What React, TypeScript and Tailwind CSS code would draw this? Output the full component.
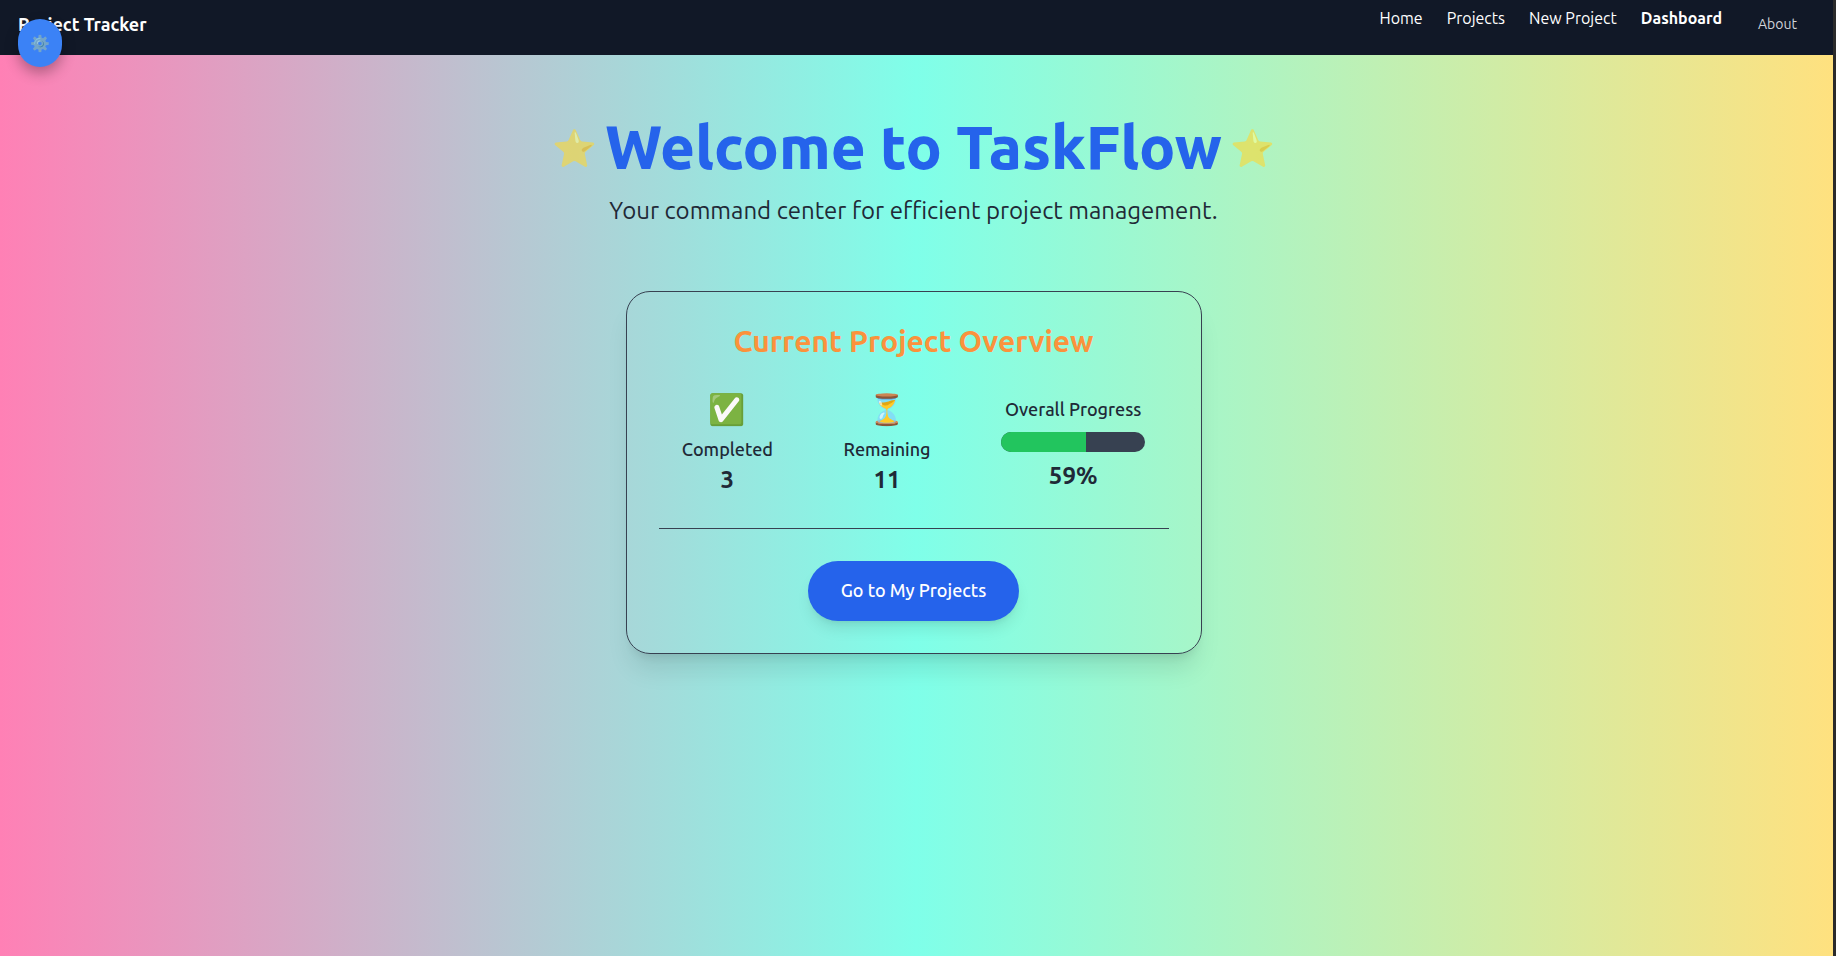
const Star = () => (
  <span className="pt-px text-4xl font-normal opacity-60" aria-hidden="true">
    ⭐
  </span>
);

const links = [
  { label: "Home", weight: "font-normal" },
  { label: "Projects", weight: "font-normal" },
  { label: "New Project", weight: "font-normal" },
  { label: "Dashboard", weight: "font-semibold" },
];

const stats = [
  { label: "Completed", value: 3, icon: "✅" },
  { label: "Remaining", value: 11, icon: "⏳" },
];

const progress = 59;

export default function App() {
  return (
    <div className="flex min-h-screen flex-col border-r-3 border-[#2b2b2b] bg-linear-to-r/srgb from-[#ff80b5] via-[#7fffe9] to-[#ffe17f] font-['Ubuntu','Noto_Sans','Noto_Color_Emoji',sans-serif] text-[#1f2937]">
      <header className="flex h-[55px] items-start justify-between bg-[#111827] pr-9 pl-[18px] text-white">
        <p className="pt-[10px] text-lg leading-7 font-semibold">Project Tracker</p>
        <nav className="flex gap-6 pt-[6px] text-base leading-6">
          {links.map((link) => (
            <a key={link.label} href="#" className={link.weight}>
              {link.label}
            </a>
          ))}
          <a href="#" className="ml-3 pt-[6px] text-sm leading-6 text-[#d1d5db]">
            About
          </a>
        </nav>
      </header>
      <button
        type="button"
        aria-label="Settings"
        className="fixed top-[19px] left-[18px] flex h-12 w-11 items-center justify-center rounded-full bg-[#3b82f6] shadow-[0_6px_14px_rgba(0,0,0,0.3)]"
      >
        <span className="text-base opacity-80" aria-hidden="true">
          ⚙️
        </span>
      </button>

      <main className="flex flex-col items-center pt-[60px] pr-[6px]">
        <h1 className="flex items-center gap-2 text-6xl leading-[64px] font-extrabold text-[#2563eb]">
          <Star />
          Welcome to TaskFlow
          <Star />
        </h1>
        <p className="mt-4 text-2xl leading-8 font-normal">Your command center for efficient project management.</p>

        <section className="mt-16 w-full max-w-xl rounded-3xl border border-[#374151] p-8 text-center shadow-xl">
          <h2 className="text-3xl leading-[34px] font-semibold text-[#fb923c]">Current Project Overview</h2>
          <div className="mt-[33px] flex items-center justify-around gap-6">
            {stats.map((stat) => (
              <div key={stat.label} className="flex flex-col items-center">
                <span className="text-3xl leading-9" aria-hidden="true">
                  {stat.icon}
                </span>
                <p className="mt-2 text-lg leading-7 font-medium">{stat.label}</p>
                <p className="mt-px text-2xl leading-8 font-semibold">{stat.value}</p>
              </div>
            ))}
            <div className="flex w-36 flex-col items-center">
              <p className="text-lg leading-7 font-medium">Overall Progress</p>
              <div className="mt-[9px] mb-2 h-5 w-full overflow-hidden rounded-full bg-[#374151]">
                <div className="h-full bg-[#22c55e]" style={{ width: `${progress}%` }} />
              </div>
              <p className="text-2xl leading-8 font-semibold">{progress}%</p>
            </div>
          </div>
          <div className="mt-8 border-t border-[#374151] pt-8">
            <button type="button" className="h-[60px] rounded-full bg-[#2563eb] px-[33px] pb-[2px] text-lg font-medium text-white shadow-lg">
              Go to My Projects
            </button>
          </div>
        </section>
      </main>
    </div>
  );
}
